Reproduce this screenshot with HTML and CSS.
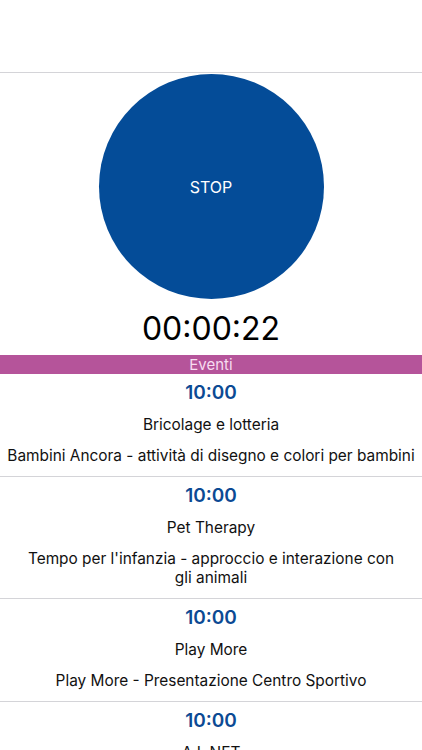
FILE: index.html
```html
<!DOCTYPE html>
<html lang="en">
<head>
    <title>Timer</title>
    <link rel="stylesheet" href="styles.css">
</head>
<body>
<div class="header"></div>
<div class="timer-area">
    <div class="stop-button">STOP</div>
    <div class="clock">00:00:22</div>
</div>
<div class="section-bar">Eventi</div>
<div class="events">
    <div class="event">
        <div class="event-time">10:00</div>
        <div class="event-title">Bricolage e lotteria</div>
        <div class="event-desc">Bambini Ancora - attività di disegno e colori per bambini</div>
    </div>
    <div class="event">
        <div class="event-time">10:00</div>
        <div class="event-title">Pet Therapy</div>
        <div class="event-desc">Tempo per l'infanzia - approccio e interazione con<br>gli animali</div>
    </div>
    <div class="event">
        <div class="event-time">10:00</div>
        <div class="event-title">Play More</div>
        <div class="event-desc">Play More - Presentazione Centro Sportivo</div>
    </div>
    <div class="event">
        <div class="event-time">10:00</div>
        <div class="event-title">A.I. NET</div>
        <div class="event-desc">A.I. NET - Presentazione attività</div>
    </div>
</div>
</body>
</html>
```

FILE: styles.css
```css
body {
    margin: 0;
    font-family: Inter, "Noto Sans", sans-serif;
    background: #fff;
    color: #111;
    text-align: center;
}

.header {
    height: 72px;
    border-bottom: 1px solid #d4d4d8;
}

.timer-area {
    display: flex;
    flex-direction: column;
    align-items: center;
    padding-top: 1px;
}

.stop-button {
    width: 225px;
    height: 225px;
    border-radius: 50%;
    background: #044c98;
    color: #fff;
    font-size: 16px;
    display: flex;
    align-items: center;
    justify-content: center;
}

.clock {
    font-size: 32px;
    line-height: 40px;
    margin-top: 10px;
    color: #000;
}

.section-bar {
    margin-top: 6px;
    height: 19px;
    line-height: 19px;
    background: #b5549a;
    color: #f7dcf0;
    font-size: 15px;
}

.event {
    padding: 7px 6px 11px;
    border-bottom: 1px solid #d4d4d8;
}

.event-time {
    font-size: 19px;
    font-weight: 600;
    line-height: 24px;
    color: #0c4a94;
}

.event-title {
    margin-top: 10px;
    font-size: 15.4px;
    line-height: 20px;
}

.event-desc {
    margin-top: 11px;
    font-size: 15.4px;
    line-height: 19px;
}
```
